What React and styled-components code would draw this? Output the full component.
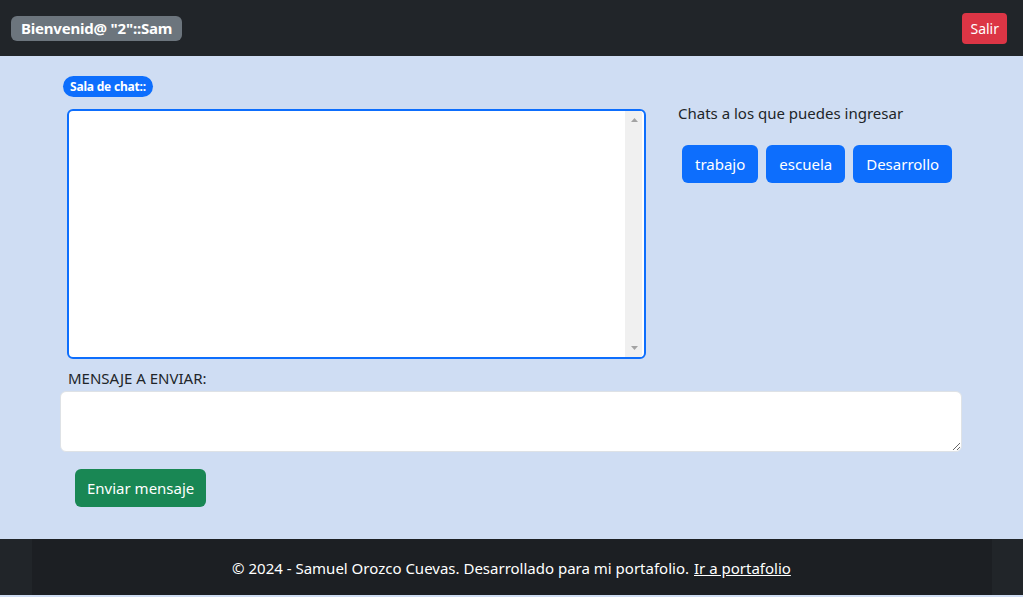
import React from "react";
import styled, { createGlobalStyle } from "styled-components";

const GlobalStyle = createGlobalStyle`
  html, body { margin: 0; padding: 0; }
  body {
    background: #cfddf3;
    font-family: "Noto Sans", "Open Sans", sans-serif;
    color: #212529;
    min-height: 597px;
  }
  * { box-sizing: border-box; }
`;

const Navbar = styled.nav`
  height: 56px;
  background: #212529;
  display: flex;
  align-items: center;
  justify-content: space-between;
  padding: 0 16px 0 11px;
`;

const Badge = styled.span`
  display: inline-flex;
  align-items: center;
  background: ${(p) => p.$bg};
  color: #fff;
  font-weight: 700;
  font-size: ${(p) => p.$size}px;
  height: ${(p) => p.$h}px;
  padding: 0 ${(p) => p.$px}px;
  border-radius: ${(p) => p.$radius}px;
  white-space: nowrap;
  letter-spacing: -0.2px;
`;

const Button = styled.button`
  border: none;
  color: #fff;
  background: ${(p) => p.$bg};
  font-family: inherit;
  font-size: ${(p) => (p.$small ? 14 : 15)}px;
  height: ${(p) => (p.$small ? 31 : 38)}px;
  padding: 0 ${(p) => p.$px ?? (p.$small ? 8 : 12)}px;
  border-radius: ${(p) => (p.$small ? 4 : 6)}px;
  cursor: pointer;
`;

const Main = styled.main`
  padding: 20px 61px 32px 60px;
  display: flex;
  flex-direction: column;
`;

const BadgeRow = styled.div`
  display: flex;
  padding-left: 3px;
  margin-bottom: 12px;
`;

const ChatRow = styled.div`
  display: flex;
  gap: 32px;
`;

const ChatFrame = styled.div`
  margin-left: 7px;
  width: 579px;
  height: 250px;
  border: 2px solid #0d6efd;
  border-radius: 6px;
  background: #fff;
  display: flex;
  overflow: hidden;
`;

const ChatBox = styled.textarea`
  flex: 1;
  border: none;
  resize: none;
  outline: none;
  background: transparent;
  font-family: inherit;
`;

const ScrollTrack = styled.div`
  width: 17px;
  margin-right: 2px;
  background: #f0f0f0;
  display: flex;
  flex-direction: column;
  justify-content: space-between;
  align-items: center;
  padding: 7px 0 7px 1px;
`;

const Arrow = ({ down }) => (
  <svg width="7" height="4" viewBox="0 0 7 4">
    <polygon points={down ? "0,0 7,0 3.5,4" : "0,4 7,4 3.5,0"} fill="#a3a3a3" />
  </svg>
);

const SidePanel = styled.div`
  display: flex;
  flex-direction: column;
`;

const SideTitle = styled.p`
  margin: 0 0 28px 0;
  font-size: 15px;
  line-height: 8px;
  height: 8px;
`;

const ChatButtons = styled.div`
  display: flex;
  gap: 8px;
  padding-left: 4px;
`;

const Label = styled.label`
  display: block;
  margin: 9px 0 3px 8px;
  font-size: 15px;
  line-height: 20px;
`;

const MessageBox = styled.textarea`
  width: 902px;
  height: 61px;
  border: 1px solid #dee2e6;
  border-radius: 6px;
  background: #fff;
  font-family: inherit;
  outline: none;
  display: block;
`;

const SendRow = styled.div`
  padding: 17px 0 0 15px;
`;

const Footer = styled.footer`
  background: #212529;
  height: 56px;
  display: flex;
  justify-content: center;
`;

const FooterInner = styled.div`
  width: 960px;
  background: #1c1f23;
  display: flex;
  align-items: center;
  justify-content: center;
  color: #fff;
  font-size: 15px;
  padding-top: 2px;
`;

const FooterLink = styled.a`
  color: #fff;
  text-decoration: underline;
  margin-left: 5px;
`;

export default function App() {
  return (
    <>
      <GlobalStyle />
      <Navbar>
        <Badge $bg="#6c757d" $size={15} $h={25} $px={10} $radius={6}>
          Bienvenid@ "2"::Sam
        </Badge>
        <Button $bg="#dc3545" $small>
          Salir
        </Button>
      </Navbar>
      <Main>
        <BadgeRow>
          <Badge $bg="#0d6efd" $size={12} $h={21} $px={7} $radius={11}>
            Sala de chat::
          </Badge>
        </BadgeRow>
        <ChatRow>
          <ChatFrame>
            <ChatBox readOnly />
            <ScrollTrack>
              <Arrow />
              <Arrow down />
            </ScrollTrack>
          </ChatFrame>
          <SidePanel>
            <SideTitle>Chats a los que puedes ingresar</SideTitle>
            <ChatButtons>
              <Button $bg="#0d6efd" $px={13}>trabajo</Button>
              <Button $bg="#0d6efd" $px={13}>escuela</Button>
              <Button $bg="#0d6efd" $px={13}>Desarrollo</Button>
            </ChatButtons>
          </SidePanel>
        </ChatRow>
        <Label>MENSAJE A ENVIAR:</Label>
        <MessageBox />
        <SendRow>
          <Button $bg="#198754">Enviar mensaje</Button>
        </SendRow>
      </Main>
      <Footer>
        <FooterInner>
          © 2024 - Samuel Orozco Cuevas. Desarrollado para mi portafolio.
          <FooterLink href="#">Ir a portafolio</FooterLink>
        </FooterInner>
      </Footer>
    </>
  );
}
